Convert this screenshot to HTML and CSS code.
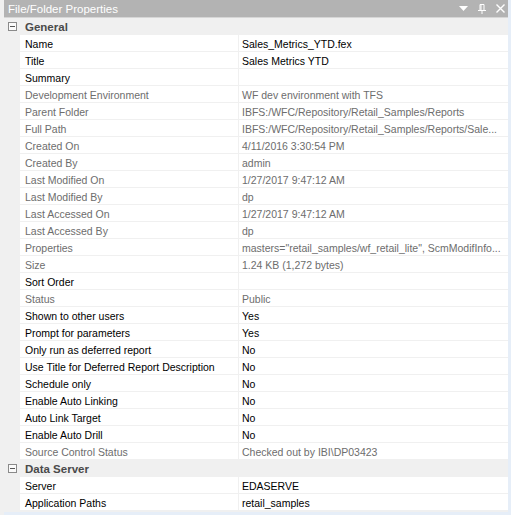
FILE: index.html
```html
<!DOCTYPE html>
<html>
<head>
<title>File/Folder Properties</title>
<link rel="stylesheet" href="styles.css">
</head>
<body>
<section class='panel'>
	<div class='panel-title'>
		<span class='panel-caption'>File/Folder Properties</span>
		<span class='panel-buttons'>
			<svg width='9' height='6' viewBox='0 0 9 6'><path d='M0 0h9L4.5 5z' fill='#fff'/></svg>
			<svg width='8' height='10' viewBox='0 0 8 10'><path d='M2 0.5h4v6M2 0.5v6M3 0.5v6M0 6.5h8M4 6.5v3.5' stroke='#fff' fill='none'/></svg>
			<svg width='9' height='9' viewBox='0 0 9 9'><path d='M0.5 0.5l8 8M8.5 0.5l-8 8' stroke='#fff' stroke-width='1.4'/></svg>
		</span>
	</div>
	<div class='grid'>
		<div class='category'>
			<span class='toggle'></span><span class='category-name'>General</span>
		</div>
		<div class='prop'><span class='prop-name'>Name</span><span class='prop-value'>Sales_Metrics_YTD.fex</span></div>
		<div class='prop'><span class='prop-name'>Title</span><span class='prop-value'>Sales Metrics YTD</span></div>
		<div class='prop'><span class='prop-name'>Summary</span><span class='prop-value'></span></div>
		<div class='prop readonly'><span class='prop-name'>Development Environment</span><span class='prop-value'>WF dev environment with TFS</span></div>
		<div class='prop readonly'><span class='prop-name'>Parent Folder</span><span class='prop-value'>IBFS:/WFC/Repository/Retail_Samples/Reports</span></div>
		<div class='prop readonly'><span class='prop-name'>Full Path</span><span class='prop-value'>IBFS:/WFC/Repository/Retail_Samples/Reports/Sale...</span></div>
		<div class='prop readonly'><span class='prop-name'>Created On</span><span class='prop-value'>4/11/2016 3:30:54 PM</span></div>
		<div class='prop readonly'><span class='prop-name'>Created By</span><span class='prop-value'>admin</span></div>
		<div class='prop readonly'><span class='prop-name'>Last Modified On</span><span class='prop-value'>1/27/2017 9:47:12 AM</span></div>
		<div class='prop readonly'><span class='prop-name'>Last Modified By</span><span class='prop-value'>dp</span></div>
		<div class='prop readonly'><span class='prop-name'>Last Accessed On</span><span class='prop-value'>1/27/2017 9:47:12 AM</span></div>
		<div class='prop readonly'><span class='prop-name'>Last Accessed By</span><span class='prop-value'>dp</span></div>
		<div class='prop readonly'><span class='prop-name'>Properties</span><span class='prop-value'>masters="retail_samples/wf_retail_lite", ScmModifInfo...</span></div>
		<div class='prop readonly'><span class='prop-name'>Size</span><span class='prop-value'>1.24 KB (1,272 bytes)</span></div>
		<div class='prop'><span class='prop-name'>Sort Order</span><span class='prop-value'></span></div>
		<div class='prop readonly'><span class='prop-name'>Status</span><span class='prop-value'>Public</span></div>
		<div class='prop'><span class='prop-name'>Shown to other users</span><span class='prop-value'>Yes</span></div>
		<div class='prop'><span class='prop-name'>Prompt for parameters</span><span class='prop-value'>Yes</span></div>
		<div class='prop'><span class='prop-name'>Only run as deferred report</span><span class='prop-value'>No</span></div>
		<div class='prop'><span class='prop-name'>Use Title for Deferred Report Description</span><span class='prop-value'>No</span></div>
		<div class='prop'><span class='prop-name'>Schedule only</span><span class='prop-value'>No</span></div>
		<div class='prop'><span class='prop-name'>Enable Auto Linking</span><span class='prop-value'>No</span></div>
		<div class='prop'><span class='prop-name'>Auto Link Target</span><span class='prop-value'>No</span></div>
		<div class='prop'><span class='prop-name'>Enable Auto Drill</span><span class='prop-value'>No</span></div>
		<div class='prop readonly'><span class='prop-name'>Source Control Status</span><span class='prop-value'>Checked out by IBI\DP03423</span></div>
		<div class='category'>
			<span class='toggle'></span><span class='category-name'>Data Server</span>
		</div>
		<div class='prop'><span class='prop-name'>Server</span><span class='prop-value'>EDASERVE</span></div>
		<div class='prop'><span class='prop-name'>Application Paths</span><span class='prop-value'>retail_samples</span></div>
	</div>
</section>
</body>
</html>
```

FILE: styles.css
```css
html, body {
	margin : 0;
	padding : 0;
}
body {
	width : 511px;
	height : 515px;
	background-color : #f0f0f0;
	font-family : "Liberation Sans", Arial, sans-serif;
	font-size : 10.5px;
	overflow : hidden;
}
.panel {
	margin-left : 4px;
	width : 504px;
	height : 512px;
	overflow : hidden;
	border-right : 3px solid #e6eef8;
	border-bottom : 3px solid #e6eef8;
}
.panel-title {
	height : 17px;
	background-color : #b3b3b3;
	display : flex;
	align-items : center;
	justify-content : space-between;
	padding : 0 3px 0 4px;
	border-bottom : 1px solid #d6d6d6;
}
.panel-caption {
	color : #fff;
	font-size : 11.5px;
}
.panel-buttons {
	display : flex;
	align-items : center;
	gap : 10px;
}
.grid {
	background-color : #f0f0f0;
}
.category {
	height : 17px;
	display : flex;
	align-items : center;
}
.toggle {
	width : 9px;
	height : 9px;
	margin : 0 8px 0 4px;
	border : 1px solid #8a8a8a;
	box-sizing : border-box;
	background : linear-gradient(#555, #555) center / 5px 1px no-repeat, #fafafa;
}
.category-name {
	font-weight : bold;
	font-size : 11.5px;
	color : #4a4a4a;
}
.prop {
	height : 17px;
	margin-left : 16px;
	display : flex;
	background-color : #fff;
	border-bottom : 1px solid #f0f0f0;
	box-sizing : border-box;
	color : #000;
}
.prop.readonly {
	color : #6d6d6d;
}
.prop-name {
	width : 219px;
	box-sizing : border-box;
	flex : none;
	padding-left : 5px;
	padding-top : 1px;
	border-right : 1px solid #f0f0f0;
	line-height : 16px;
	white-space : nowrap;
	overflow : hidden;
}
.prop-value {
	flex : 1;
	padding-left : 3px;
	padding-top : 1px;
	line-height : 16px;
	white-space : nowrap;
	overflow : hidden;
	text-overflow : ellipsis;
}
```
